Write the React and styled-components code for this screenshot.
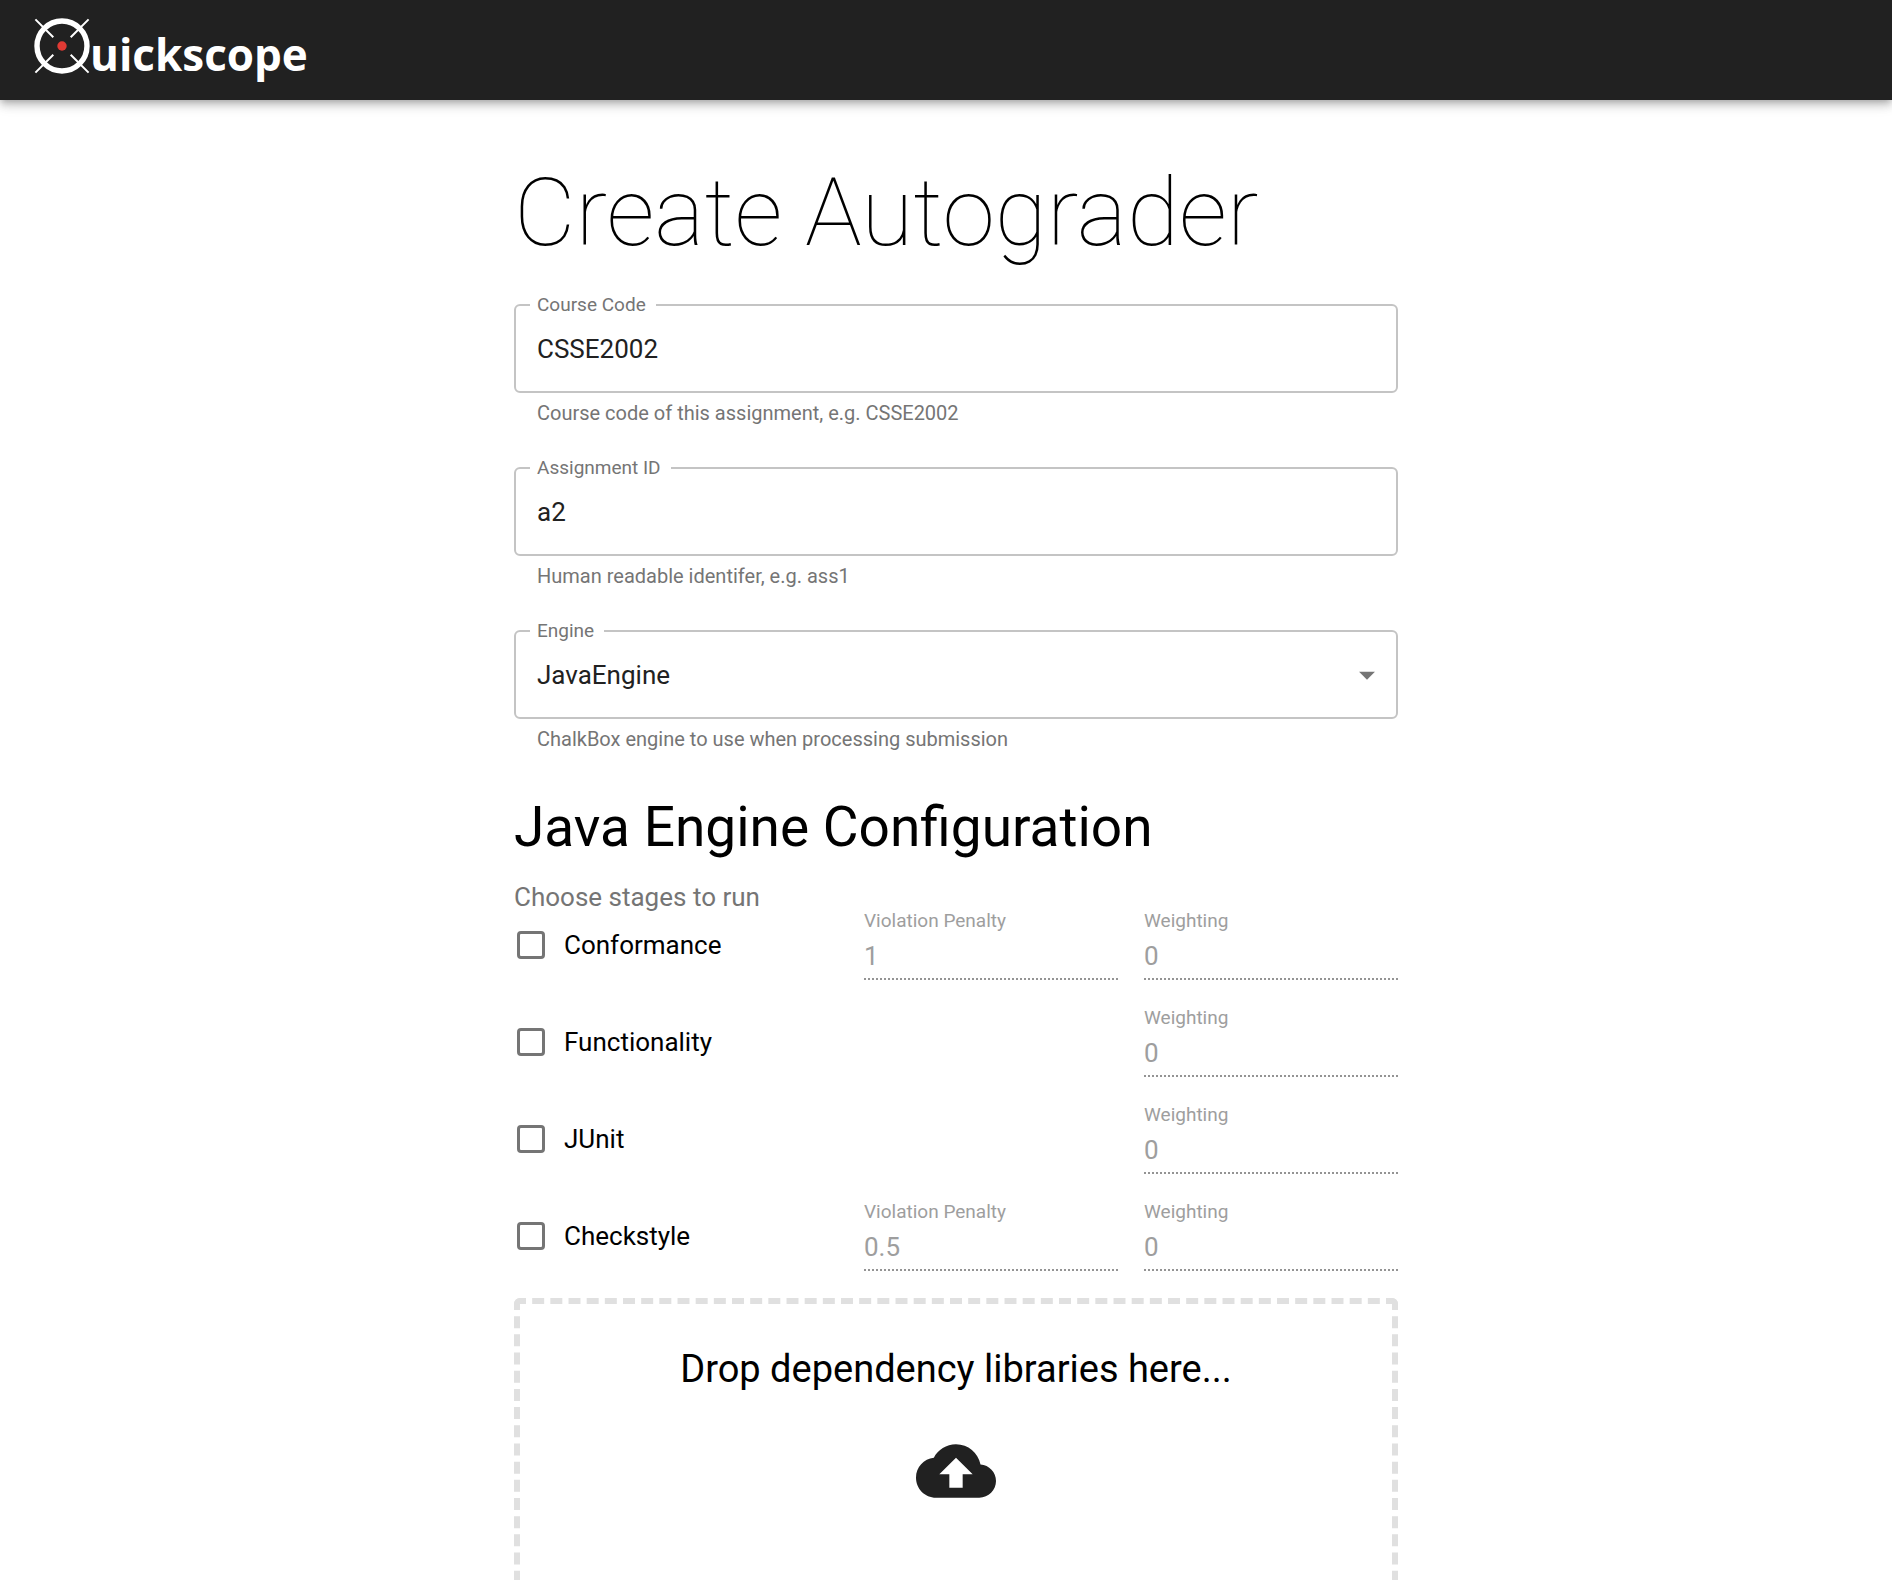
import React, { useState } from "react";
import styled, { createGlobalStyle } from "styled-components";

const GlobalStyle = createGlobalStyle`
  *, *::before, *::after { box-sizing: border-box; }
  body {
    margin: 0;
    background: #fff;
    color: #000;
    font-family: Roboto, "Liberation Sans", sans-serif;
    font-size: 26px;
  }
  input, select { font: inherit; }
`;

const AppBar = styled.header`
  height: 100px;
  background: #212121;
  box-shadow: 0 3px 6px -2px rgba(0, 0, 0, 0.2), 0 6px 8px 0 rgba(0, 0, 0, 0.14),
    0 2px 16px 0 rgba(0, 0, 0, 0.12);
`;

const LogoLink = styled.a`
  display: inline-flex;
  align-items: flex-start;
  padding: 18px 34px 0;
  color: #fff;
  text-decoration: none;
`;

const LogoMark = styled.svg`
  width: 56px;
  height: 56px;
`;

const LogoText = styled.span`
  font: 700 44px/72px "Open Sans", "Noto Sans", sans-serif;
`;

const Page = styled.main`
  padding: 57px 0 64px 20px;
`;

const Form = styled.form`
  max-width: 884px;
  margin: 0 auto;
`;

const Title = styled.h1`
  margin: 0 0 25px;
  font-size: 95px;
  font-weight: 100;
  line-height: 112px;
`;

const Fields = styled.div`
  display: flex;
  flex-direction: column;
  gap: 32px;
`;

const Outline = styled.fieldset`
  margin: 0;
  padding: 0;
  min-width: 0;
  border: 2px solid #c4c4c4;
  border-radius: 6px;
`;

const Legend = styled.legend`
  margin-left: 14px;
  padding: 0 10px 0 7px;
  font-size: 19px;
  line-height: 22px;
  color: #757575;
`;

const TextInput = styled.input`
  display: block;
  width: 100%;
  height: 65px;
  margin-bottom: 10px;
  padding: 0 21px;
  border: 0;
  outline: 0;
  background: transparent;
  color: #212121;
`;

const SelectBox = styled.div`
  display: grid;
  align-items: center;
  margin-bottom: 10px;

  > * {
    grid-area: 1 / 1;
  }
`;

const Select = styled.select`
  width: 100%;
  height: 65px;
  padding: 0 60px 0 21px;
  appearance: none;
  border: 0;
  outline: 0;
  background: transparent;
  color: #212121;
`;

const Arrow = styled.svg`
  justify-self: end;
  width: 38px;
  height: 38px;
  margin-right: 10px;
  fill: #757575;
  pointer-events: none;
`;

const Helper = styled.p`
  margin: 8px 23px 0;
  font-size: 20px;
  line-height: 24px;
  color: #757575;
`;

const SectionTitle = styled.h2`
  margin: 44px 0 26px;
  font-size: 55px;
  font-weight: 400;
  line-height: 64px;
`;

const Stages = styled.fieldset`
  margin: 0 0 27px;
  padding: 0;
  min-width: 0;
  border: 0;
`;

const StagesLegend = styled.legend`
  padding: 0;
  line-height: 24px;
  color: #757575;
`;

const StageList = styled.div`
  display: grid;
  gap: 26px;
`;

const StageRow = styled.div`
  display: grid;
  grid-template-columns: minmax(0, 1fr) 254px 254px;
  column-gap: 26px;
  align-items: center;
`;

const StageLabel = styled.label`
  display: flex;
  align-items: center;
  gap: 19px;
  padding-left: 3px;
  line-height: 32px;
`;

const Checkbox = styled.input`
  appearance: none;
  width: 28px;
  height: 28px;
  margin: 0;
  border: 3px solid #757575;
  border-radius: 4px;

  &:checked {
    background: #757575;
  }
`;

const NumberField = styled.div`
  grid-column: ${(p) => p.$column};
`;

const NumberLabel = styled.label`
  display: block;
  font-size: 19px;
  line-height: 24px;
  color: #9e9e9e;
`;

const NumberInput = styled.input`
  display: block;
  width: 100%;
  height: 47px;
  padding: 0;
  border: 0;
  border-bottom: 2px dotted #949494;
  border-radius: 0;
  background: transparent;
  color: #9e9e9e;
`;

const DropZone = styled.label`
  display: flex;
  flex-direction: column;
  align-items: center;
  gap: 37px;
  min-height: 412px;
  padding: 40px 24px;
  border: 6px dashed #e0e0e0;
  border-radius: 6px;
  font-size: 38px;
  line-height: 50px;
  text-align: center;
`;

const CloudIcon = styled.svg`
  width: 80px;
  height: 80px;
  fill: #212121;
`;

const STAGES = [
  { id: "conformance", name: "Conformance", penalty: "1", weighting: "0" },
  { id: "functionality", name: "Functionality", weighting: "0" },
  { id: "junit", name: "JUnit", weighting: "0" },
  { id: "checkstyle", name: "Checkstyle", penalty: "0.5", weighting: "0" },
];

function Field({ id, label, helper, children }) {
  return (
    <div>
      <Outline>
        <Legend>
          <label htmlFor={id}>{label}</label>
        </Legend>
        {children}
      </Outline>
      <Helper id={`${id}-help`}>{helper}</Helper>
    </div>
  );
}

function StageNumber({ id, label, column, value, enabled }) {
  return (
    <NumberField $column={column}>
      <NumberLabel htmlFor={id}>{label}</NumberLabel>
      <NumberInput id={id} type="text" inputMode="decimal" defaultValue={value} disabled={!enabled} />
    </NumberField>
  );
}

function Stage({ id, name, penalty, weighting }) {
  const [enabled, setEnabled] = useState(false);
  return (
    <StageRow>
      <StageLabel htmlFor={id}>
        <Checkbox
          id={id}
          type="checkbox"
          checked={enabled}
          onChange={(e) => setEnabled(e.target.checked)}
        />
        {name}
      </StageLabel>
      {penalty && (
        <StageNumber id={`${id}-penalty`} label="Violation Penalty" column={2} value={penalty} enabled={enabled} />
      )}
      <StageNumber id={`${id}-weighting`} label="Weighting" column={3} value={weighting} enabled={enabled} />
    </StageRow>
  );
}

export default function App() {
  return (
    <>
      <GlobalStyle />
      <AppBar>
        <LogoLink href="#">
          <LogoMark viewBox="0 0 56 56" aria-hidden="true">
            <circle cx="28" cy="28" r="25" fill="none" stroke="#fff" strokeWidth="5.4" />
            <path
              d="M1.4 1.4 19.3 19.3M54.6 1.4 36.7 19.3M1.4 54.6 19.3 36.7M54.6 54.6 36.7 36.7"
              stroke="#fff"
              strokeWidth="2"
            />
            <circle cx="28" cy="28" r="4.7" fill="#e03a34" />
          </LogoMark>
          <LogoText>uickscope</LogoText>
        </LogoLink>
      </AppBar>
      <Page>
        <Form onSubmit={(e) => e.preventDefault()}>
          <Title>Create Autograder</Title>
          <Fields>
            <Field id="course" label="Course Code" helper="Course code of this assignment, e.g. CSSE2002">
              <TextInput id="course" type="text" defaultValue="CSSE2002" aria-describedby="course-help" />
            </Field>
            <Field id="assignment" label="Assignment ID" helper="Human readable identifer, e.g. ass1">
              <TextInput id="assignment" type="text" defaultValue="a2" aria-describedby="assignment-help" />
            </Field>
            <Field id="engine" label="Engine" helper="ChalkBox engine to use when processing submission">
              <SelectBox>
                <Select id="engine" defaultValue="JavaEngine" aria-describedby="engine-help">
                  <option>JavaEngine</option>
                </Select>
                <Arrow viewBox="0 0 24 24" aria-hidden="true">
                  <path d="M7 10l5 5 5-5z" />
                </Arrow>
              </SelectBox>
            </Field>
          </Fields>
          <SectionTitle>Java Engine Configuration</SectionTitle>
          <Stages>
            <StagesLegend>Choose stages to run</StagesLegend>
            <StageList>
              {STAGES.map((stage) => (
                <Stage key={stage.id} {...stage} />
              ))}
            </StageList>
          </Stages>
          <DropZone>
            Drop dependency libraries here...
            <CloudIcon viewBox="0 0 24 24" aria-hidden="true">
              <path d="M19.35 10.04C18.67 6.59 15.64 4 12 4 9.11 4 6.6 5.64 5.35 8.04 2.34 8.36 0 10.91 0 14c0 3.31 2.69 6 6 6h13c2.76 0 5-2.24 5-5 0-2.64-2.05-4.78-4.65-4.96zM14 13v4h-4v-4H7l5-5 5 5h-3z" />
            </CloudIcon>
            <input type="file" multiple hidden />
          </DropZone>
        </Form>
      </Page>
    </>
  );
}
